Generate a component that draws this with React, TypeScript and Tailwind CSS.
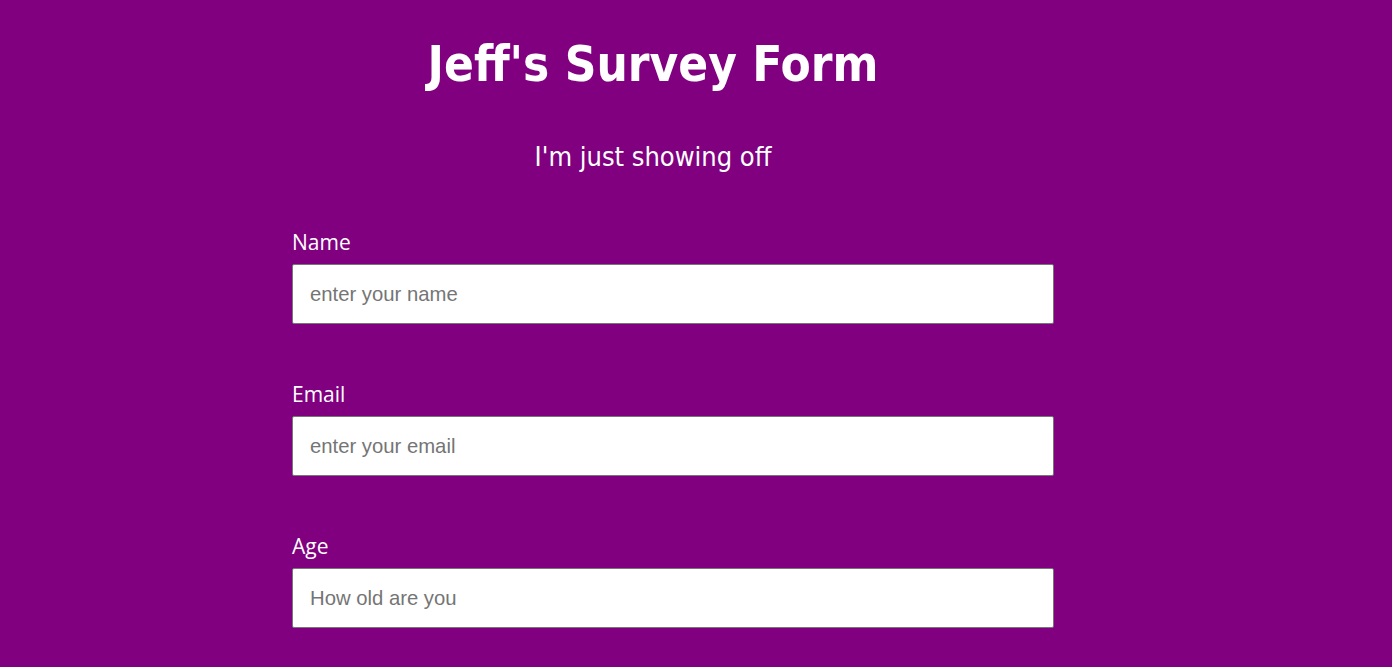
export default function App() {
  const fields = [
    { label: "Name", ph: "enter your name" },
    { label: "Email", ph: "enter your email" },
    { label: "Age", ph: "How old are you" },
  ];
  return (
    <div className="min-h-[667px] w-full bg-[#800080] text-white overflow-hidden">
      <div className="w-[1306px] flex flex-col items-center">
        <h1
          className="mt-[31px] text-[49px] font-bold leading-[68px]"
          style={{ fontFamily: "'DejaVu Sans', sans-serif", fontStretch: "condensed" }}
        >
          Jeff's Survey Form
        </h1>
        <p
          className="mt-[39px] text-[27px] leading-[38px]"
          style={{ fontFamily: "'DejaVu Sans', sans-serif", fontStretch: "condensed" }}
        >
          I'm just showing off
        </p>
      </div>
      <form className="ml-[292px] w-[762px] mt-[53px] flex flex-col gap-[57px]">
        {fields.map((f) => (
          <div key={f.label} className="flex flex-col">
            <label
              className="text-[21px] leading-[26px] mb-[9px]"
              style={{ fontFamily: "'Open Sans', sans-serif" }}
            >
              {f.label}
            </label>
            <input
              placeholder={f.ph}
              className="h-[60px] w-full bg-white border border-[#767676] rounded-[2px] pl-[17px] text-[20.3px] text-black placeholder:text-[#757575] outline-none"
              style={{ fontFamily: "'Liberation Sans', Arial, sans-serif" }}
            />
          </div>
        ))}
      </form>
    </div>
  );
}
